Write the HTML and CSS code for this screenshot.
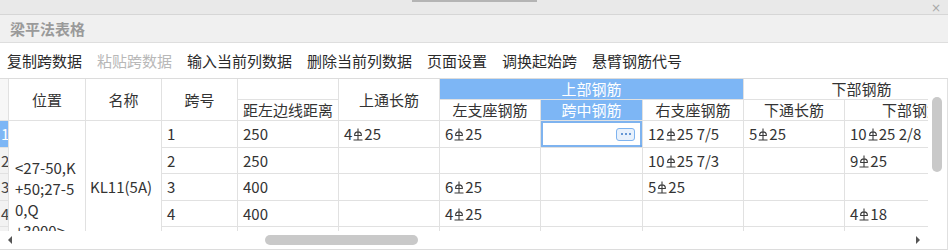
FILE: index.html
```html
<!DOCTYPE html>
<html lang="zh-CN">
<head>
<meta charset="utf-8">
<title>梁平法表格</title>
<link rel="stylesheet" href="styles.css">
</head>
<body>
<div class="win">
  <div class="topbar"><span class="grip"></span><span class="close">×</span></div>
  <div class="title">梁平法表格</div>
  <div class="toolbar">
    <span class="tb">复制跨数据</span>
    <span class="tb off">粘贴跨数据</span>
    <span class="tb">输入当前列数据</span>
    <span class="tb">删除当前列数据</span>
    <span class="tb">页面设置</span>
    <span class="tb">调换起始跨</span>
    <span class="tb">悬臂钢筋代号</span>
  </div>
  <div class="gridarea">
    <div class="gridrow">
      <div class="clip">
        <table class="grid">
          <colgroup>
            <col class="c-rh"><col class="c-pos"><col class="c-name"><col class="c-span">
            <col class="c-w"><col class="c-w"><col class="c-w"><col class="c-w2"><col class="c-w"><col class="c-w"><col class="c-last">
          </colgroup>
          <thead>
            <tr class="h1">
              <th class="rh" rowspan="2"></th>
              <th rowspan="2">位置</th>
              <th rowspan="2">名称</th>
              <th rowspan="2">跨号</th>
              <th></th>
              <th rowspan="2">上通长筋</th>
              <th colspan="3" class="hl">上部钢筋</th>
              <th colspan="2" class="grp">下部钢筋</th>
            </tr>
            <tr class="h2">
              <th>距左边线距离</th>
              <th>左支座钢筋</th>
              <th class="hl">跨中钢筋</th>
              <th>右支座钢筋</th>
              <th>下通长筋</th>
              <th class="lastcol">下部钢筋</th>
            </tr>
          </thead>
          <tbody>
            <tr class="r1">
              <td class="rh cur">1</td>
              <td rowspan="5" class="pos">&lt;27-50,K<br>+50;27-5<br>0,Q<br>+3000&gt;</td>
              <td rowspan="5" class="name">KL11(5A)</td>
              <td>1</td><td>250</td>
              <td>4<svg class="rb" viewBox="0 0 10 13"><path d="M5 0.5V12M1.6 7.5A3.4 3.6 0 0 1 8.4 7.5M1.2 7.5H8.8M0.5 12H9.5"/></svg>25</td>
              <td>6<svg class="rb" viewBox="0 0 10 13"><path d="M5 0.5V12M1.6 7.5A3.4 3.6 0 0 1 8.4 7.5M1.2 7.5H8.8M0.5 12H9.5"/></svg>25</td>
              <td class="sel"><div class="selin"><span class="more"><i></i><i></i><i></i></span></div><span class="handle"></span></td>
              <td>12<svg class="rb" viewBox="0 0 10 13"><path d="M5 0.5V12M1.6 7.5A3.4 3.6 0 0 1 8.4 7.5M1.2 7.5H8.8M0.5 12H9.5"/></svg>25 7/5</td>
              <td>5<svg class="rb" viewBox="0 0 10 13"><path d="M5 0.5V12M1.6 7.5A3.4 3.6 0 0 1 8.4 7.5M1.2 7.5H8.8M0.5 12H9.5"/></svg>25</td>
              <td>10<svg class="rb" viewBox="0 0 10 13"><path d="M5 0.5V12M1.6 7.5A3.4 3.6 0 0 1 8.4 7.5M1.2 7.5H8.8M0.5 12H9.5"/></svg>25 2/8</td>
            </tr>
            <tr class="r2">
              <td class="rh">2</td>
              <td>2</td><td>250</td><td></td><td></td><td></td>
              <td>10<svg class="rb" viewBox="0 0 10 13"><path d="M5 0.5V12M1.6 7.5A3.4 3.6 0 0 1 8.4 7.5M1.2 7.5H8.8M0.5 12H9.5"/></svg>25 7/3</td>
              <td></td>
              <td>9<svg class="rb" viewBox="0 0 10 13"><path d="M5 0.5V12M1.6 7.5A3.4 3.6 0 0 1 8.4 7.5M1.2 7.5H8.8M0.5 12H9.5"/></svg>25</td>
            </tr>
            <tr class="r3">
              <td class="rh">3</td>
              <td>3</td><td>400</td><td></td>
              <td>6<svg class="rb" viewBox="0 0 10 13"><path d="M5 0.5V12M1.6 7.5A3.4 3.6 0 0 1 8.4 7.5M1.2 7.5H8.8M0.5 12H9.5"/></svg>25</td>
              <td></td>
              <td>5<svg class="rb" viewBox="0 0 10 13"><path d="M5 0.5V12M1.6 7.5A3.4 3.6 0 0 1 8.4 7.5M1.2 7.5H8.8M0.5 12H9.5"/></svg>25</td>
              <td></td><td></td>
            </tr>
            <tr class="r4">
              <td class="rh">4</td>
              <td>4</td><td>400</td><td></td>
              <td>4<svg class="rb" viewBox="0 0 10 13"><path d="M5 0.5V12M1.6 7.5A3.4 3.6 0 0 1 8.4 7.5M1.2 7.5H8.8M0.5 12H9.5"/></svg>25</td>
              <td></td><td></td><td></td>
              <td>4<svg class="rb" viewBox="0 0 10 13"><path d="M5 0.5V12M1.6 7.5A3.4 3.6 0 0 1 8.4 7.5M1.2 7.5H8.8M0.5 12H9.5"/></svg>18</td>
            </tr>
            <tr class="r5">
              <td class="rh"></td>
              <td></td><td></td><td></td>
              <td class="peek"><svg class="rb" viewBox="0 0 10 13"><path d="M5 0.5V12M1.6 7.5A3.4 3.6 0 0 1 8.4 7.5M1.2 7.5H8.8M0.5 12H9.5"/></svg></td>
              <td></td><td></td><td></td>
              <td class="peek"><svg class="rb" viewBox="0 0 10 13"><path d="M5 0.5V12M1.6 7.5A3.4 3.6 0 0 1 8.4 7.5M1.2 7.5H8.8M0.5 12H9.5"/></svg></td>
            </tr>
          </tbody>
        </table>
      </div>
      <div class="vscroll"><div class="vthumb"></div></div>
    </div>
    <div class="hscroll">
      <span class="arr arr-l"></span>
      <div class="htrack"><div class="hthumb"></div></div>
      <span class="arr arr-r"></span>
    </div>
  </div>
</div>
</body>
</html>
```
FILE: styles.css
```css
* { box-sizing: border-box; }
html, body { margin: 0; padding: 0; background: #fff; }
body {
  font-family: "Noto Sans CJK SC", "Noto Sans", sans-serif;
  font-size: 15px;
  color: #333;
}
.win {
  width: 948px;
  height: 250px;
  overflow: hidden;
  display: flex;
  flex-direction: column;
}
.topbar {
  height: 15px;
  flex: none;
  background: #e9e9e9;
  border-bottom: 1px solid #d6d6d6;
  display: flex;
  align-items: flex-start;
  padding-left: 412px;
  padding-right: 7px;
}
.grip {
  width: 125px;
  height: 2px;
  background: #b4b4b4;
}
.close {
  margin-left: auto;
  font-family: "DejaVu Sans", sans-serif;
  font-size: 12px;
  line-height: 16px;
  color: #a8a8a8;
}
.title {
  height: 28px;
  flex: none;
  background: #f0f0f0;
  border-bottom: 1px solid #dedede;
  padding-left: 10px;
  line-height: 27px;
  font-size: 15px;
  font-weight: bold;
  color: #9a9a9a;
}
.toolbar {
  height: 35px;
  flex: none;
  display: flex;
  align-items: center;
  gap: 15px;
  padding-left: 7px;
  font-size: 15px;
  color: #2b2b2b;
}
.tb.off { color: #b8b8b8; }

.gridarea {
  flex: none;
  height: 172px;
  border-top: 1px solid #dcdcdc;
  display: flex;
  flex-direction: column;
}
.gridrow {
  height: 152px;
  display: flex;
}
.clip {
  width: 928px;
  height: 152px;
  overflow: hidden;
}
.vscroll {
  width: 20px;
  padding: 18px 0 0 4px;
  border-right: 1px solid #e0e0e0;
}
.vthumb {
  width: 10px;
  height: 75px;
  border-radius: 5px;
  background: #c9c9c9;
}
.hscroll {
  height: 19px;
  border-bottom: 1px solid #dcdcdc;
  border-right: 1px solid #e0e0e0;
  display: flex;
  align-items: center;
  padding: 0 27px 0 8px;
}
.arr {
  width: 0;
  height: 0;
  border-top: 4px solid transparent;
  border-bottom: 4px solid transparent;
}
.arr-l { border-right: 4px solid #555; }
.arr-r { border-left: 4px solid #555; }
.htrack {
  flex: 1;
  height: 10px;
  padding-left: 253px;
}
.hthumb {
  width: 153px;
  height: 10px;
  border-radius: 5px;
  background: #c9c9c9;
}

.grid {
  table-layout: fixed;
  border-collapse: separate;
  border-spacing: 0;
  width: 980px;
}
.c-rh { width: 9px; }
.c-pos { width: 77px; }
.c-name { width: 76px; }
.c-span { width: 76px; }
.c-w { width: 101px; }
.c-w2 { width: 102px; }
.c-last { width: 135px; }

.grid th, .grid td {
  border-right: 1px solid #e1e1e1;
  border-bottom: 1px solid #e1e1e1;
  padding: 0 0 0 5px;
  overflow: hidden;
  white-space: nowrap;
  font-size: 15px;
  line-height: 20px;
  text-align: left;
  vertical-align: middle;
  color: #333;
}
.grid th {
  font-weight: normal;
  text-align: center;
  padding: 0;
  background: #fff;
}
.grid th.hl {
  background: #7db6f5;
  color: #fff;
}
.h1 { height: 21px; }
.h2 { height: 21px; }
.r1 { height: 26px; }
.r2 { height: 26px; }
.r3 { height: 27px; }
.r4 { height: 26px; }
.r5 { height: 26px; }

.grid .rh {
  padding: 0 0 0 1px;
  background: #f2f2f2;
  color: #444;
  font-size: 15px;
}
.grid th.rh { background: #f7f7f7; }
.grid td.rh.cur {
  background: #7db6f5;
  color: #fff;
}
.grid td.pos {
  vertical-align: top;
  padding: 36px 0 0 6px;
  line-height: 21px;
}
.grid td.name {
  padding-left: 4px;
}
.grid td.peek { padding-left: 13px; }
.rb {
  width: 10px;
  height: 13px;
  vertical-align: -1px;
  margin: 0 1px;
  fill: none;
  stroke: #3a3a3a;
  stroke-width: 1.1;
}
.grid td.sel {
  position: relative;
  padding: 0;
}
.selin {
  height: 26px;
  border: 2px solid #7eb3ef;
  display: flex;
  align-items: center;
  justify-content: flex-end;
  padding-right: 5px;
}
.more {
  width: 19px;
  height: 13px;
  border: 1px solid #7eb3ef;
  border-radius: 3px;
  background: #e8f1fc;
  display: flex;
  align-items: center;
  justify-content: center;
  gap: 2px;
}
.more i {
  width: 2px;
  height: 2px;
  background: #3a78c9;
  border-radius: 1px;
}
.handle {
  position: absolute;
  right: -3px;
  bottom: -3px;
  width: 5px;
  height: 5px;
  background: #6ea8ec;
}
```
